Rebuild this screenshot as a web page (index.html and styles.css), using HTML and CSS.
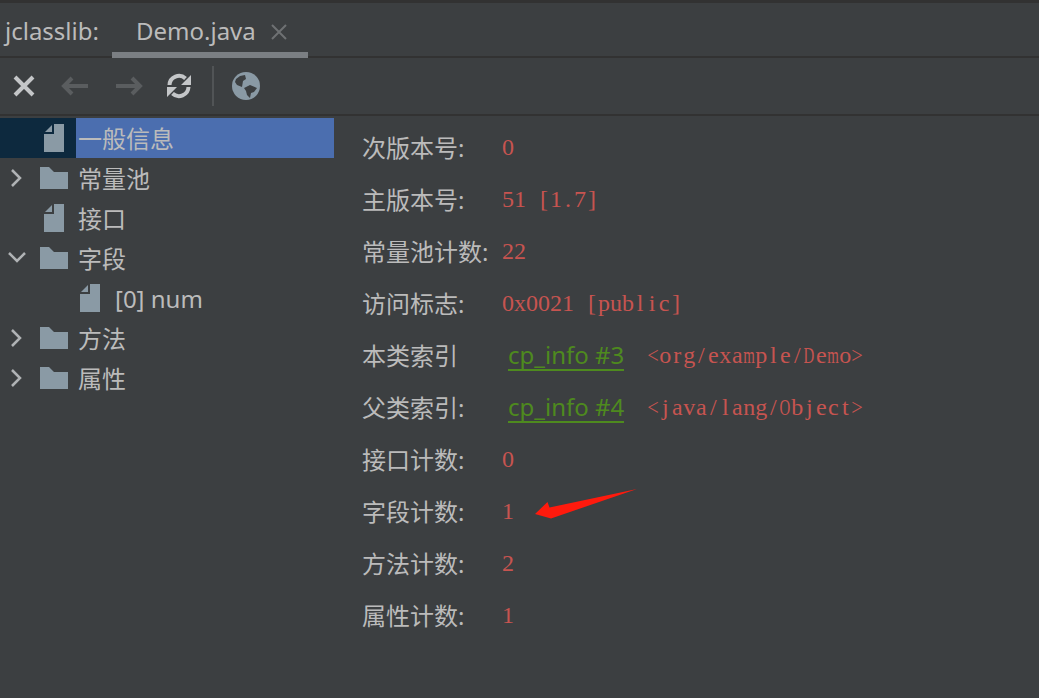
FILE: index.html
```html
<!DOCTYPE html>
<html lang="zh">
<head>
<meta charset="utf-8">
<title>jclasslib</title>
<link rel="stylesheet" href="styles.css">
</head>
<body>
<svg class="defs" width="0" height="0" aria-hidden="true">
  <symbol id="i-file" viewBox="0 0 20 28"><path d="M10 0h10v28H0V10h10z"/><path d="M8 1v7H1z"/></symbol>
  <symbol id="i-folder" viewBox="0 0 28 22"><path d="M0 0h9l5 5h14v17H0z"/></symbol>
</svg>
<div class="app">
  <header class="tabbar">
    <span class="app-name">jclasslib:</span>
    <div class="tab"><span>Demo.java</span>
      <svg class="tab-x" width="16" height="16" viewBox="0 0 16 16"><path d="M1 1l14 14M15 1L1 15"/></svg>
    </div>
  </header>
  <nav class="toolbar">
    <svg class="tool" width="24" height="24" viewBox="0 0 24 24"><path class="s-light" d="M3 3l18 18M21 3L3 21"/></svg>
    <svg class="tool" width="30" height="24" viewBox="0 0 30 24"><path class="s-dim" d="M28 12H4M12 4l-8 8 8 8"/></svg>
    <svg class="tool" width="30" height="24" viewBox="0 0 30 24"><path class="s-dim" d="M2 12h24M18 4l8 8-8 8"/></svg>
    <svg class="tool refresh" width="26" height="26" viewBox="0 0 26 26"><path class="s-refresh" d="M3.500 12a9.500 9.500 0 0 1 16-6.500M22.500 14a9.500 9.500 0 0 1-16 6.500"/><path class="f-light" d="M15 12h10V2zM11 14H1v10z"/></svg>
    <i class="tool-sep"></i>
    <svg class="tool" width="28" height="28" viewBox="0 0 28 28"><circle class="f-icon" cx="14" cy="14" r="14"/><path class="f-bg" d="M4 7l4-3 5-1 1 4-3 2-1 6-5-2-2-3zM12 16l6-3 7 3-3 4-3 1-1 5-3-3-1-4z"/></svg>
  </nav>
  <main class="body">
    <aside class="tree">
      <div class="row selected">
        <span class="twist"></span>
        <svg class="file"><use href="#i-file"/></svg>
        <span class="label">一般信息</span>
      </div>
      <div class="row">
        <svg class="twist" viewBox="0 0 40 40"><path d="M12 12l8 8-8 8"/></svg>
        <svg class="folder"><use href="#i-folder"/></svg>
        <span class="label">常量池</span>
      </div>
      <div class="row">
        <span class="twist"></span>
        <svg class="file"><use href="#i-file"/></svg>
        <span class="label">接口</span>
      </div>
      <div class="row">
        <svg class="twist" viewBox="0 0 40 40"><path d="M9 15l8 8 8-8"/></svg>
        <svg class="folder"><use href="#i-folder"/></svg>
        <span class="label">字段</span>
      </div>
      <div class="row child">
        <span class="twist"></span>
        <svg class="file"><use href="#i-file"/></svg>
        <span class="label">[0] num</span>
      </div>
      <div class="row">
        <svg class="twist" viewBox="0 0 40 40"><path d="M12 12l8 8-8 8"/></svg>
        <svg class="folder"><use href="#i-folder"/></svg>
        <span class="label">方法</span>
      </div>
      <div class="row">
        <svg class="twist" viewBox="0 0 40 40"><path d="M12 12l8 8-8 8"/></svg>
        <svg class="folder"><use href="#i-folder"/></svg>
        <span class="label">属性</span>
      </div>
    </aside>
    <section class="detail">
      <div class="line"><span class="key">次版本号:</span><span class="val">0</span></div>
      <div class="line"><span class="key">主版本号:</span><span class="val">51 [1.7]</span></div>
      <div class="line"><span class="key">常量池计数:</span><span class="val">22</span></div>
      <div class="line"><span class="key">访问标志:</span><span class="val">0x0021 [public]</span></div>
      <div class="line"><span class="key">本类索引</span><a class="ref">cp_info #3</a><span class="val">&lt;org/example/Demo&gt;</span></div>
      <div class="line"><span class="key">父类索引:</span><a class="ref">cp_info #4</a><span class="val">&lt;java/lang/Object&gt;</span></div>
      <div class="line"><span class="key">接口计数:</span><span class="val">0</span></div>
      <div class="line"><span class="key">字段计数:</span><span class="val">1</span></div>
      <div class="line"><span class="key">方法计数:</span><span class="val">2</span></div>
      <div class="line"><span class="key">属性计数:</span><span class="val">1</span></div>
    </section>
  </main>
  <svg class="annot" width="110" height="36" viewBox="0 0 110 36"><path d="M2 28L14.500 16l2 5.500L104 3 18 32.500z"/></svg>
</div>
<script src="mono.js"></script>
</body>
</html>
```
FILE: styles.css
```css
* { box-sizing: border-box; }
html, body { margin: 0; padding: 0; height: 100%; }
body { background: #3c3f41; color: #bbbbbb; font-family: "Noto Sans", "Noto Sans CJK SC", sans-serif; overflow: hidden; }
.defs { position: absolute; }
.app { position: relative; width: 1039px; height: 698px; border-top: 3px solid #323232; display: flex; flex-direction: column; }
.tabbar { height: 55px; display: flex; align-items: flex-start; border-bottom: 2px solid #323232; padding-left: 5px; font-size: 24px; }
.app-name { margin-top: 10px; line-height: 36px; width: 107px; }
.tab { height: 55px; width: 196px; padding: 10px 0 0 24px; display: flex; align-items: flex-start; gap: 15px; line-height: 36px; border-bottom: 6px solid #7b7f83; }
.tab-x { margin-top: 11px; fill: none; stroke: #6e7173; stroke-width: 2; }
.toolbar { height: 58px; display: flex; align-items: center; border-bottom: 2px solid #323232; padding-left: 12px; }
.tool { flex: none; margin-right: 24px; fill: none; }
.refresh { margin-left: -2px; margin-right: 20px; }
.s-light { fill: none; stroke: #c4c6c8; stroke-width: 4; }
.s-refresh { fill: none; stroke: #c4c6c8; stroke-width: 4; }
.s-dim { fill: none; stroke: #5a5d5f; stroke-width: 4; }
.f-light { fill: #c4c6c8; }
.f-icon { fill: #8a9aa5; }
.f-bg { fill: #3c3f41; }
.tool-sep { width: 2px; height: 40px; background: #515456; margin-right: 18px; }
.body { flex: 1; display: flex; }
.tree { width: 334px; padding-top: 2px; font-size: 24px; flex: none; }
.row { height: 40px; display: flex; align-items: center; }
.twist { flex: none; width: 40px; height: 40px; fill: none; stroke: #b0b3b5; stroke-width: 2.5; }
.file { flex: none; width: 20px; height: 28px; margin-left: 4px; margin-right: 12px; fill: #8a9aa5; }
.folder { flex: none; width: 28px; height: 22px; margin-right: 8px; fill: #8a9aa5; }
.label { flex: 1; height: 40px; line-height: 42px; padding-left: 2px; white-space: nowrap; }
.selected { background: #0d293e; }
.selected .label { background: #4b6eaf; }
.child { padding-left: 36px; }
.child .label { padding-left: 3px; }
.detail { flex: 1; padding: 6px 0 0 28px; font-size: 24px; }
.line { height: 52px; display: flex; align-items: center; white-space: nowrap; }
.key { width: 141px; color: #bbbbbb; flex: none; padding-bottom: 4px; }
.val { display: flex; font-family: "Liberation Serif", serif; font-size: 24px; line-height: 30px; color: #c75450; margin: 0 0 2px -1px; }
.ch { flex: none; width: 12px; display: flex; justify-content: center; white-space: pre; }
.ch.wide { transform: scaleX(0.62); }
.ch.angle { transform: scaleX(0.85); }
.ref { color: #4e8a1e; border-bottom: 2px solid #4e8a1e; line-height: 29px; margin: 0 24px 2px 5px; }
.annot { position: absolute; left: 533px; top: 483px; fill: #ff1a0d; }
```
FILE: mono.js
```js
// The value column is a fixed-pitch face: give each character its own 12px cell,
// and narrow the few glyphs that are wider than the cell.
document.querySelectorAll('.val').forEach(function (el) {
  var text = el.textContent;
  el.textContent = '';
  Array.from(text).forEach(function (c) {
    var cell = document.createElement('span');
    cell.className = 'ch';
    if (/[mDO]/.test(c)) cell.classList.add('wide');
    else if (/[<>]/.test(c)) cell.classList.add('angle');
    cell.textContent = c;
    el.appendChild(cell);
  });
});
```
